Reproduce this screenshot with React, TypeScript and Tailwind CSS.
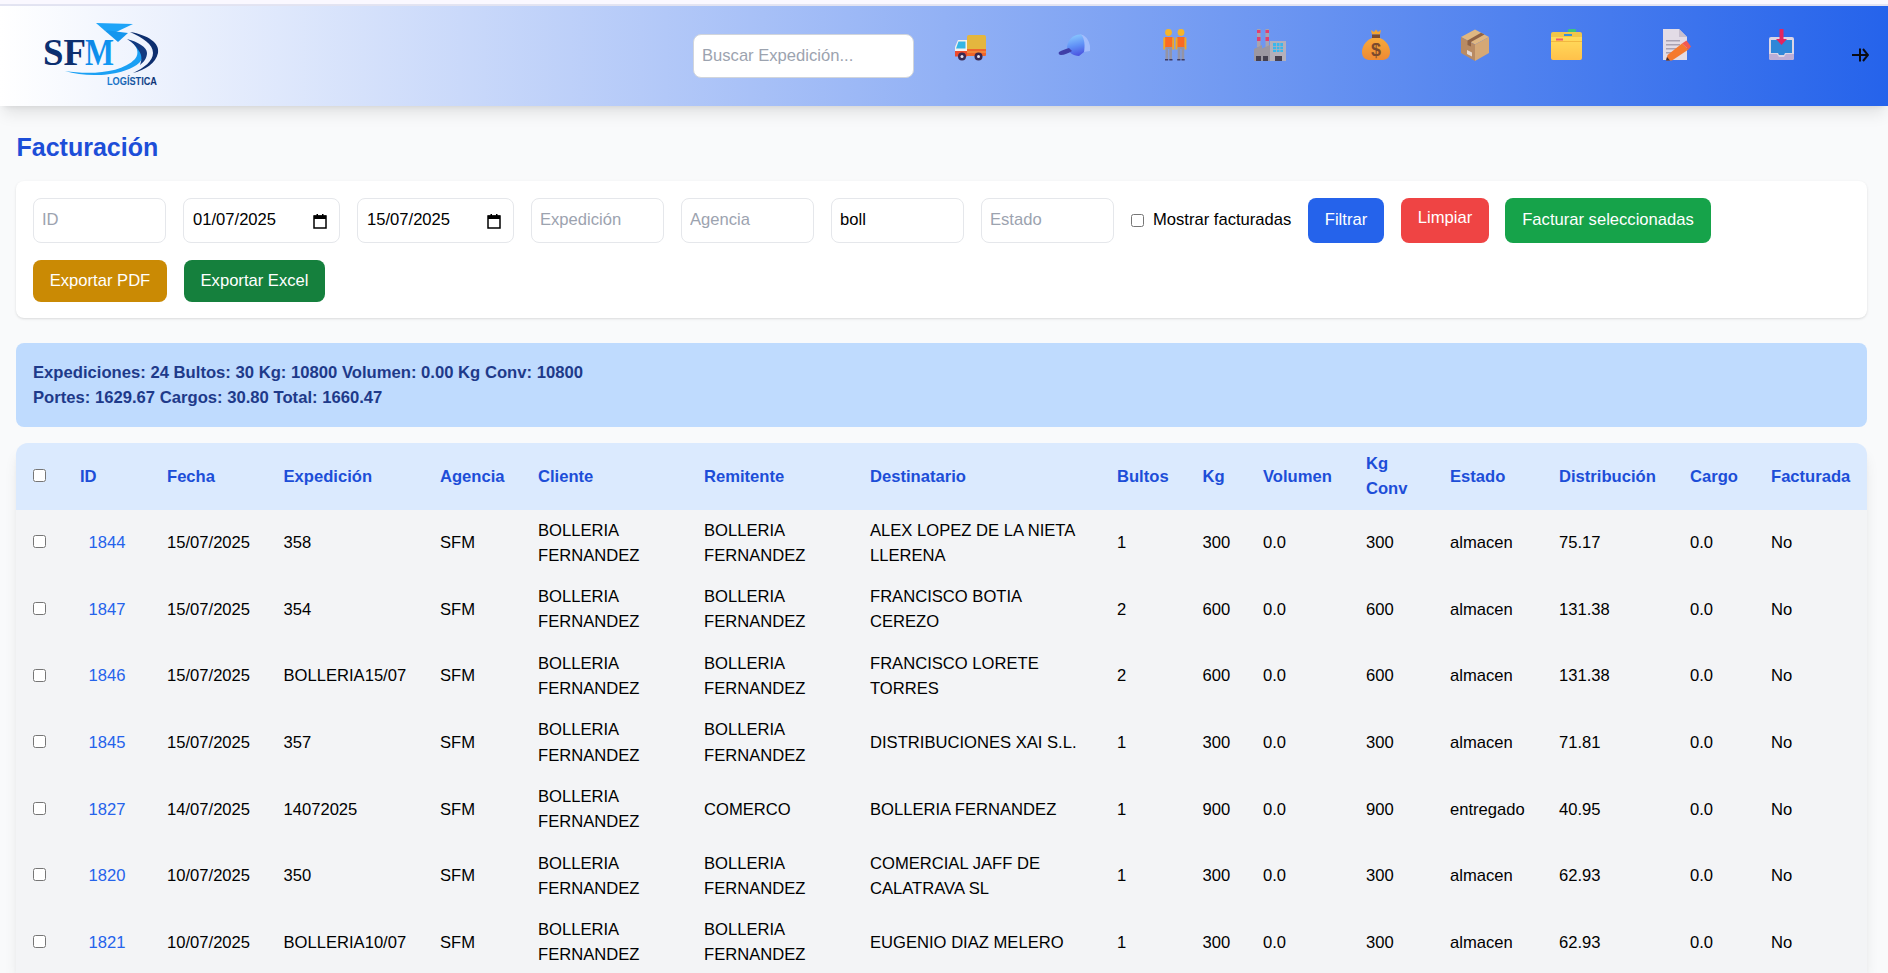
const rows = [
  { id: 1844, fecha: "15/07/2025", exp: "358", remitente: "BOLLERIA FERNANDEZ", dest: "ALEX LOPEZ DE LA NIETA LLERENA", bultos: 1, kg: 300, estado: "almacen", dist: "75.17" },
  { id: 1847, fecha: "15/07/2025", exp: "354", remitente: "BOLLERIA FERNANDEZ", dest: "FRANCISCO BOTIA CEREZO", bultos: 2, kg: 600, estado: "almacen", dist: "131.38" },
  { id: 1846, fecha: "15/07/2025", exp: "BOLLERIA15/07", remitente: "BOLLERIA FERNANDEZ", dest: "FRANCISCO LORETE TORRES", bultos: 2, kg: 600, estado: "almacen", dist: "131.38" },
  { id: 1845, fecha: "15/07/2025", exp: "357", remitente: "BOLLERIA FERNANDEZ", dest: "DISTRIBUCIONES XAI S.L.", bultos: 1, kg: 300, estado: "almacen", dist: "71.81" },
  { id: 1827, fecha: "14/07/2025", exp: "14072025", remitente: "COMERCO", dest: "BOLLERIA FERNANDEZ", bultos: 1, kg: 900, estado: "entregado", dist: "40.95" },
  { id: 1820, fecha: "10/07/2025", exp: "350", remitente: "BOLLERIA FERNANDEZ", dest: "COMERCIAL JAFF DE CALATRAVA SL", bultos: 1, kg: 300, estado: "almacen", dist: "62.93" },
  { id: 1821, fecha: "10/07/2025", exp: "BOLLERIA10/07", remitente: "BOLLERIA FERNANDEZ", dest: "EUGENIO DIAZ MELERO", bultos: 1, kg: 300, estado: "almacen", dist: "62.93" },
];

const columns = [
  { label: "ID", width: "w-[87px]" },
  { label: "Fecha", width: "w-[116.5px]" },
  { label: "Expedición", width: "w-[156.5px]" },
  { label: "Agencia", width: "w-[98px]" },
  { label: "Cliente", width: "w-[166px]" },
  { label: "Remitente", width: "w-[166px]" },
  { label: "Destinatario", width: "w-[247px]" },
  { label: "Bultos", width: "w-[85.5px]" },
  { label: "Kg", width: "w-[60.5px]" },
  { label: "Volumen", width: "w-[103px]" },
  { label: "Kg Conv", width: "w-[84px]" },
  { label: "Estado", width: "w-[109px]" },
  { label: "Distribución", width: "w-[131px]" },
  { label: "Cargo", width: "w-[81px]" },
  { label: "Facturada", width: "w-[113px]" },
];

function Logo() {
  return (
    <svg width="140" height="75" viewBox="0 0 140 75" className="shrink-0">
      <defs>
        <linearGradient id="logoM" x1="0" y1="0" x2="1" y2="1">
          <stop offset="0" stopColor="#0a7fe0" />
          <stop offset="1" stopColor="#13a0fa" />
        </linearGradient>
        <linearGradient id="logoLabel" x1="0" y1="0" x2="1" y2="0">
          <stop offset="0" stopColor="#1a7fd6" />
          <stop offset="1" stopColor="#0d2e6e" />
        </linearGradient>
      </defs>
      <path d="M66 8 L103 9 L84 18 L74 15Z" fill="#1ea4f8" />
      <path d="M74 15 L98 18 L88 27 L81 21Z" fill="#1596ee" />
      <path d="M35 56 C60 60 92 58 105 44 C110 38 107 31 100 25 C112 32 116 40 110 47 C98 60 60 64 35 56Z" fill="#1ba0f4" />
      <path d="M100 17 C118 20 130 28 128 38 C126 48 115 55 103 58 C114 53 123 46 123 38 C123 29 113 23 100 17Z" fill="#0d2e6e" />
      <path d="M97 24 C108 27 117 32 117 38 C117 43 114 47 110 50 C112 45 112 40 109 36 C106 31 102 27 97 24Z" fill="#123a80" />
      <text x="13" y="50" fontFamily="'Liberation Serif', serif" fontWeight="700" fontSize="37" fill="#0c2f70" textLength="43" lengthAdjust="spacingAndGlyphs">SF</text>
      <text x="55" y="50" fontFamily="'Liberation Serif', serif" fontWeight="700" fontSize="37" fill="url(#logoM)" textLength="29" lengthAdjust="spacingAndGlyphs">M</text>
      <text x="77" y="69.500" fontFamily="'Liberation Sans', sans-serif" fontWeight="700" fontSize="10" fill="url(#logoLabel)" textLength="50" lengthAdjust="spacingAndGlyphs">LOGÍSTICA</text>
    </svg>
  );
}

function TruckIcon() {
  return (
    <svg viewBox="0 0 32 32" className="h-8 w-8">
      <g transform="translate(0 1)">
        <path d="M13 7 a2 2 0 0 1 2-2 h15 a2 2 0 0 1 2 2 v16 h-19z" fill="#e4b63e" />
        <path d="M13 19 h19 v6 a1 1 0 0 1-1 1 h-18z" fill="#f0662c" />
        <path d="M4 10 h9 v16 h-12 v-9z" fill="#f5f1ee" />
        <path d="M4.500 11.500 h7 v7 h-9.500 z" fill="#35b5e5" />
        <path d="M1 21 h12 v5.500 h-12z" fill="#ee4a2c" />
        <path d="M13 21 h19 v2 h-19z" fill="#f4853a" />
        <circle cx="8" cy="26.500" r="4" fill="#3a2850" />
        <circle cx="8" cy="26.500" r="1.500" fill="#e9e3ef" />
        <circle cx="24.500" cy="26.500" r="4" fill="#3a2850" />
        <circle cx="24.500" cy="26.500" r="1.500" fill="#e9e3ef" />
      </g>
    </svg>
  );
}

function CapIcon() {
  return (
    <svg viewBox="0 0 32 32" className="h-8 w-8">
      <defs>
        <linearGradient id="capDome" x1="0.300" y1="0" x2="0.500" y2="1">
          <stop offset="0" stopColor="#8ccbff" />
          <stop offset="0.550" stopColor="#5f8ff6" />
          <stop offset="1" stopColor="#4b55e0" />
        </linearGradient>
      </defs>
      <path d="M22 5.500 C29 6 32.500 14 32.500 22 L25 23 C26 16 26 10 22 5.500Z" fill="#a3bdfc" />
      <path d="M9 18 C10 10 16 5 23 5.500 C27 10 27 17 26 23 L21 27 C15 27 10 23 9 18Z" fill="url(#capDome)" />
      <path d="M1 23 C4 21 8 20 11 19 L14 22 C11 24 6 26 3 26 C1 26 0 24.500 1 23Z" fill="#3f3fa8" />
    </svg>
  );
}

function PeopleIcon() {
  return (
    <svg viewBox="0 0 32 32" className="h-8 w-8">
      <circle cx="9.500" cy="3.500" r="3.400" fill="#f5b52a" />
      <path d="M6 8 h7.500 v10.500 h-7.500z" fill="#fb6a22" />
      <path d="M4.300 8.500 h1.900 v12 h-1.900z M13.300 8.500 h1.900 v12 h-1.900z" fill="#f3a821" />
      <path d="M6.500 18 h6.500 v13 h-2.700 v-11 h-1.100 v11 h-2.700z" fill="#9494a6" />
      <path d="M6 30 h3.200 v1.500 h-3.200z M10.300 30 h3.200 v1.500 h-3.200z" fill="#3c3b66" />
      <circle cx="22" cy="3.500" r="3.400" fill="#f5b52a" />
      <path d="M18.200 8 h7.500 v10.500 h-7.500z" fill="#fb6a22" />
      <path d="M16.500 8.500 h1.900 v12 h-1.900z M25.500 8.500 h1.900 v12 h-1.900z" fill="#f3a821" />
      <path d="M18.700 18 h6.500 v13 h-2.700 v-11 h-1.100 v11 h-2.700z" fill="#9494a6" />
      <path d="M18.200 30 h3.200 v1.500 h-3.200z M22.500 30 h3.200 v1.500 h-3.200z" fill="#3c3b66" />
    </svg>
  );
}

function FactoryIcon() {
  return (
    <svg viewBox="0 0 32 32" className="h-8 w-8">
      <path d="M3 0 h3.500 v18 h-3.500z M11.500 0 h3.500 v18 h-3.500z" fill="#a8a3b0" />
      <path d="M3 1 h3.500 v3 h-3.500z M3 8 h3.500 v4 h-3.500z M11.500 1 h3.500 v3 h-3.500z M11.500 8 h3.500 v4 h-3.500z" fill="#e2406f" />
      <path d="M0 20 l8-4 v3.500 l8-3.500 v16 h-16z" fill="#9c97a0" />
      <path d="M16 12 h16 v20 h-16z" fill="#b3b0ba" />
      <path d="M19 14 h10 v9 h-10z" fill="#38b7ee" />
      <path d="M19 17 h10 v0.800 h-10z M19 20 h10 v0.800 h-10z M22 14 h0.800 v9 h-0.800z M25.500 14 h0.800 v9 h-0.800z" fill="#b3b0ba" />
      <path d="M2 27 h5 v5 h-5z M9 27 h5 v5 h-5z M21 27 h7 v5 h-7z" fill="#45404f" />
    </svg>
  );
}

function BagIcon() {
  return (
    <svg viewBox="0 0 32 32" className="h-8 w-8">
      <defs>
        <linearGradient id="bagFill" x1="0" y1="0" x2="0" y2="1">
          <stop offset="0" stopColor="#f7a93a" />
          <stop offset="1" stopColor="#ee8a34" />
        </linearGradient>
      </defs>
      <path d="M11 1 L14 3 L16 0.500 L18 3 L21 1 L20 5.500 H12Z" fill="#f5a52e" />
      <path d="M12 5.500 h8 v3.500 h-8z" fill="#7b4a2d" />
      <path d="M12 9 h8 C27 12 30 18 30 23 C30 29 26 31 22 31 H10 C6 31 2 29 2 23 C2 18 5 12 12 9Z" fill="url(#bagFill)" />
      <text x="16" y="26.500" textAnchor="middle" fontFamily="'Liberation Sans', sans-serif" fontWeight="700" fontSize="18" fill="#7b4a2d">$</text>
    </svg>
  );
}

function BoxIcon() {
  return (
    <svg viewBox="0 0 32 32" className="h-8 w-8">
      <path d="M16 0.500 L30 8 L16 15.500 L2 8Z" fill="#e0b781" />
      <path d="M2 8 L16 15.500 V32 L2 24Z" fill="#b98b63" />
      <path d="M30 8 L16 15.500 V32 L30 24Z" fill="#d5a876" />
      <path d="M22 3.700 L8.500 11.500 V16 L12 17.500 V13 L25.500 5.500Z" fill="#8f6245" />
      <path d="M8 21 l5 2.500 v4 l-5-2.500z" fill="#e6d9d2" />
    </svg>
  );
}

function FolderIcon() {
  return (
    <svg viewBox="0 0 32 32" className="h-8 w-8">
      <defs>
        <linearGradient id="folderFill" x1="0" y1="0" x2="0" y2="1">
          <stop offset="0" stopColor="#ffdc5c" />
          <stop offset="1" stopColor="#ffc14a" />
        </linearGradient>
      </defs>
      <path d="M18 1 a2 2 0 0 1 2-1.500 h4 a2 2 0 0 1 2 1.500 v3 h-8z" fill="#3ec27f" />
      <path d="M1 5 a2 2 0 0 1 2-2 h27 a2 2 0 0 1 2 2 v10 h-31z" fill="#f2c649" />
      <path d="M14 5 h8 v2 h-8z" fill="#3c8fd8" />
      <path d="M1 8 h31 v21 a2 2 0 0 1-2 2 h-27 a2 2 0 0 1-2-2z" fill="url(#folderFill)" />
      <path d="M1 12 h31 v1 h-31z" fill="#f2b83f" />
      <path d="M6 9.500 h7 v2 h-7z" fill="#ee5a6e" />
    </svg>
  );
}

function DocIcon() {
  return (
    <svg viewBox="0 0 32 32" className="h-8 w-8">
      <path d="M3 0 H19 L27 8 V31 H3Z" fill="#e3dce6" />
      <path d="M19 0 L27 8 H19Z" fill="#c7bfce" />
      <path d="M6 11 h14 v1.500 h-14z M6 15 h14 v1.500 h-14z M6 19 h11 v1.500 h-11z M6 23 h7 v1.500 h-7z" fill="#a9a2b2" />
      <path d="M22 14.500 L28.500 20.500 L12 31.500 L6 31.500 L7.500 26Z" fill="#f5792e" />
      <path d="M22 14.500 L26.500 11.500 L31 17.500 L28.500 20.500Z" fill="#f25a52" />
      <path d="M6 31.500 L7 28 L10 31.500Z" fill="#3e2f38" />
    </svg>
  );
}

function InboxIcon() {
  return (
    <svg viewBox="0 0 32 32" className="h-8 w-8">
      <path d="M6 8 h21 a2 2 0 0 1 2 2 v19 a2 2 0 0 1-2 2 h-21 a2 2 0 0 1-2-2 v-19 a2 2 0 0 1 2-2z" fill="#dcd6e6" />
      <path d="M6 11 h21 v13 h-7 l-1 2 h-5 l-1-2 h-7z" fill="#2f87d8" />
      <path d="M4 25 h8 l2 3 h5 l2-3 h8 v4 a2 2 0 0 1-2 2 h-21 a2 2 0 0 1-2-2z" fill="#bcaed6" />
      <path d="M14.500 0 h4 v10 h3.500 L16.500 16 L11 10 h3.500z" fill="#e3245f" />
    </svg>
  );
}

const navIcons = [
  { Icon: TruckIcon, gap: "ml-[40px]" },
  { Icon: CapIcon, gap: "ml-[72px]" },
  { Icon: PeopleIcon, gap: "ml-[69px]" },
  { Icon: FactoryIcon, gap: "ml-[63px]" },
  { Icon: BagIcon, gap: "ml-[74px]" },
  { Icon: BoxIcon, gap: "ml-[67px]" },
  { Icon: FolderIcon, gap: "ml-[59px]" },
  { Icon: DocIcon, gap: "ml-[78px]" },
  { Icon: InboxIcon, gap: "ml-[73px]" },
];

function CalendarGlyph() {
  return (
    <svg viewBox="0 0 14 16" className="h-[16px] w-[14px] shrink-0">
      <path d="M1 3 h12 v12 h-12z" fill="none" stroke="#000" strokeWidth="1.500" />
      <path d="M1 2.500 h12 v3.500 h-12z" fill="#000" />
      <path d="M3.500 1 h1.500 v2 h-1.500z M9 1 h1.500 v2 h-1.500z" fill="#000" />
    </svg>
  );
}

function FilterInput({ placeholder, value, width }: { placeholder: string; value?: string; width: string }) {
  return (
    <input
      placeholder={placeholder}
      defaultValue={value}
      className={`h-[45px] ${width} shrink-0 rounded-lg border border-[#e5e7eb] bg-white px-2 pb-[2px] text-[16.6px] text-black outline-none placeholder:text-[#9ca3af]`}
    />
  );
}

function DateInput({ value }: { value: string }) {
  return (
    <div className="flex h-[45px] w-[157px] shrink-0 items-center justify-between rounded-lg border border-[#e5e7eb] bg-white pl-[9px] pr-[12px]">
      <input readOnly value={value} className="w-[100px] bg-transparent text-[16.6px] text-black outline-none" />
      <CalendarGlyph />
    </div>
  );
}

function ActionButton({ className, children }: { className: string; children: string }) {
  return <button className={`rounded-lg text-[16.6px] text-white ${className}`}>{children}</button>;
}

export default function App() {
  return (
    <div className="h-screen overflow-hidden bg-[#f9fafb] font-['Liberation_Sans',Arial,sans-serif] text-[16.6px] text-black">
      <div className="h-[6px] border-b-2 border-[#e3e4f2] bg-[#faf8ff]" />

      <header className="flex h-[100px] items-center bg-linear-to-r/srgb from-white to-[#2563eb] shadow-[0_10px_15px_-3px_rgba(0,0,0,0.1),0_4px_6px_-4px_rgba(0,0,0,0.1)]">
        <div className="-mt-[7px] ml-[30px] w-[663px] shrink-0">
          <Logo />
        </div>
        <input
          placeholder="Buscar Expedición..."
          className="h-[44px] w-[221px] shrink-0 rounded-lg border border-[#d1d5db] bg-white px-2 text-[16.6px] outline-none placeholder:text-[#9ca3af]"
        />
        {navIcons.map(({ Icon, gap }, i) => (
          <a key={i} className={`${gap} -mt-[22px] shrink-0`}>
            <Icon />
          </a>
        ))}
        <svg viewBox="0 0 17 14" className="ml-[55px] -mt-[2px] h-[14px] w-[17px] shrink-0" fill="none" stroke="#0b0b14" strokeWidth="2">
          <path d="M0 7 H15.500" />
          <path d="M8 0.500 V13.500" />
          <path d="M11 1 L16 7 L11 13" />
        </svg>
      </header>

      <main className="pl-4 pr-[21px]">
        <h1 className="mt-[25px] pl-[0.5px] text-[25px] font-bold leading-[32px] text-[#1d4ed8]">Facturación</h1>

        <section className="mt-[18px] h-[137px] rounded-lg bg-white pl-[17px] pt-[17px] shadow-[0_1px_3px_0_rgba(0,0,0,0.1),0_1px_2px_-1px_rgba(0,0,0,0.1)]">
          <div className="flex items-center">
            <FilterInput placeholder="ID" width="w-[133px]" />
            <div className="ml-[17px]"><DateInput value="01/07/2025" /></div>
            <div className="ml-[17px]"><DateInput value="15/07/2025" /></div>
            <div className="ml-[17px]"><FilterInput placeholder="Expedición" width="w-[133px]" /></div>
            <div className="ml-[17px]"><FilterInput placeholder="Agencia" width="w-[133px]" /></div>
            <div className="ml-[17px]"><FilterInput placeholder="" value="boll" width="w-[133px]" /></div>
            <div className="ml-[17px]"><FilterInput placeholder="Estado" width="w-[133px]" /></div>
            <label className="ml-[17px] flex w-[161px] shrink-0 items-center gap-[9px]">
              <input type="checkbox" className="h-[13px] w-[13px]" />
              Mostrar facturadas
            </label>
            <ActionButton className="ml-[16px] h-[45px] w-[76px] bg-[#2563eb]">Filtrar</ActionButton>
            <ActionButton className="ml-[17px] h-[45px] w-[88px] bg-[#ef4444] pb-[4px]">Limpiar</ActionButton>
            <ActionButton className="ml-[16px] h-[45px] w-[206px] bg-[#16a34a]">Facturar seleccionadas</ActionButton>
          </div>
          <div className="mt-[17px] flex">
            <ActionButton className="h-[42px] w-[134px] bg-[#ca8a04]">Exportar PDF</ActionButton>
            <ActionButton className="ml-[17px] h-[42px] w-[141px] bg-[#15803d]">Exportar Excel</ActionButton>
          </div>
        </section>

        <section className="mt-[25px] h-[84px] rounded-lg bg-[#bfdbfe] pl-[17px] pt-[17px] text-[16.65px] font-semibold leading-[25px] text-[#1e3a8a]">
          <p>Expediciones: 24 Bultos: 30 Kg: 10800 Volumen: 0.00 Kg Conv: 10800</p>
          <p>Portes: 1629.67 Cargos: 30.80 Total: 1660.47</p>
        </section>

        <div className="mt-[16px] overflow-hidden rounded-t-xl bg-[#f3f4f6] shadow-[0_10px_15px_-3px_rgba(0,0,0,0.1),0_4px_6px_-4px_rgba(0,0,0,0.1)]">
          <table className="w-full table-fixed border-collapse text-left">
            <colgroup>
              <col className="w-[47px]" />
              {columns.map((c) => (
                <col key={c.label} className={c.width} />
              ))}
            </colgroup>
            <thead className="bg-[#dbeafe] text-[#1d4ed8]">
              <tr className="h-[66.6px]">
                <th className="pl-[17px] font-bold">
                  <input type="checkbox" className="mb-[2px] block h-[13px] w-[13px]" />
                </th>
                {columns.map((c) => (
                  <th key={c.label} className="pl-[17px] pr-[8px] font-bold leading-[25.3px]">
                    {c.label}
                  </th>
                ))}
              </tr>
            </thead>
            <tbody className="leading-[25.3px]">
              {rows.map((r) => (
                <tr key={r.id} className="h-[66.6px]">
                  <td className="pl-[17px]">
                    <input type="checkbox" className="mb-[2px] block h-[13px] w-[13px]" />
                  </td>
                  <td className="pl-[25.5px] text-[#2563eb]">{r.id}</td>
                  <td className="pl-[17px]">{r.fecha}</td>
                  <td className="pl-[17px]">{r.exp}</td>
                  <td className="pl-[17px]">SFM</td>
                  <td className="pl-[17px] pr-[8px]">BOLLERIA FERNANDEZ</td>
                  <td className="pl-[17px] pr-[8px]">{r.remitente}</td>
                  <td className="pl-[17px] pr-[8px]">{r.dest}</td>
                  <td className="pl-[17px]">{r.bultos}</td>
                  <td className="pl-[17px]">{r.kg}</td>
                  <td className="pl-[17px]">0.0</td>
                  <td className="pl-[17px]">{r.kg}</td>
                  <td className="pl-[17px]">{r.estado}</td>
                  <td className="pl-[17px]">{r.dist}</td>
                  <td className="pl-[17px]">0.0</td>
                  <td className="pl-[17px]">No</td>
                </tr>
              ))}
            </tbody>
          </table>
        </div>
      </main>
    </div>
  );
}
